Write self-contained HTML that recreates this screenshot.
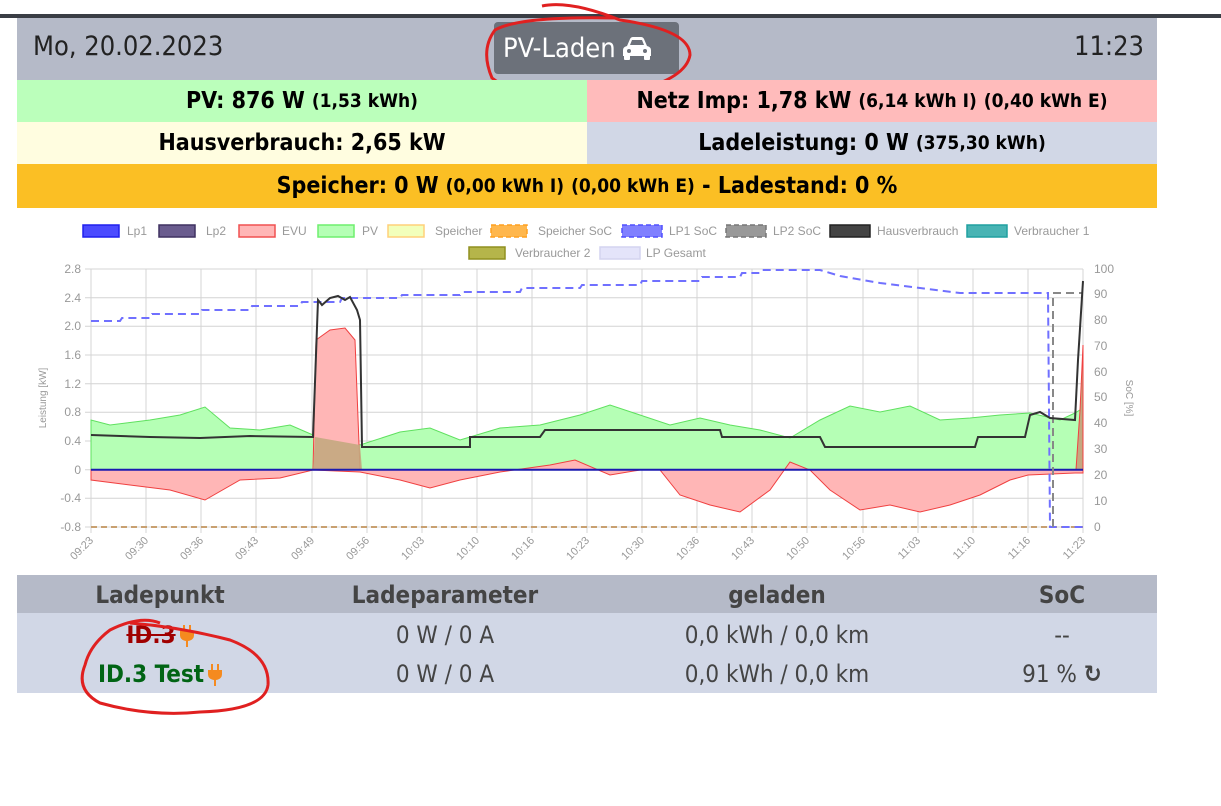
<!DOCTYPE html>
<html><head><meta charset="utf-8"><style>
body{margin:0;width:1221px;height:806px;background:#fff;position:relative;overflow:hidden;font-family:"DejaVu Sans Condensed","Liberation Sans",sans-serif}
.a{position:absolute;box-sizing:border-box}
.c{display:flex;align-items:center;justify-content:center;font-weight:bold;font-size:23px;color:#000}
.c small{font-size:19px;margin-left:7px}
.t{font-size:27px;color:#222;font-family:"DejaVu Sans Condensed",sans-serif}
.plug{display:inline-block;vertical-align:middle;margin-left:4px}
</style></head><body>
<div class="a" style="left:0;top:14px;width:1221px;height:4px;background:#3a3e45"></div>
<div class="a" style="left:17px;top:18px;width:1140px;height:62px;background:#b5bac8"></div>
<div class="a t" style="left:33px;top:31px">Mo, 20.02.2023</div>
<div class="a t" style="left:1074px;top:31px">11:23</div>
<div class="a" style="left:494px;top:22px;width:185px;height:52px;background:#6c717a;border-radius:4px;color:#fff;font-size:27px;display:flex;align-items:center;padding-left:9px">PV-Laden
<svg width="32" height="24" viewBox="0 0 32 24" style="margin-left:5px"><path d="M6 10 L9 3 Q10 1 12 1 H20 Q22 1 23 3 L26 10 Q30 11 30 14 V20 H2 V14 Q2 11 6 10Z M9 9 H23 L21 4 H11Z" fill="#fff" fill-rule="evenodd"/><rect x="3" y="19" width="6" height="5" rx="1" fill="#fff"/><rect x="23" y="19" width="6" height="5" rx="1" fill="#fff"/><circle cx="8" cy="15" r="2" fill="#6c717a"/><circle cx="24" cy="15" r="2" fill="#6c717a"/></svg></div>
<svg class="a" style="left:480px;top:0" width="220" height="110"><path d="M62 6 Q90 0 140 20 Q210 30 210 55 Q205 85 120 98 Q40 100 12 78 Q0 50 15 30 Q40 16 135 18" fill="none" stroke="#e02020" stroke-width="3"/></svg>
<div class="a c" style="left:17px;top:80px;width:570px;height:42px;background:#bbffbb">PV: 876 W<small>(1,53 kWh)</small></div>
<div class="a c" style="left:587px;top:80px;width:570px;height:42px;background:#ffbbbb">Netz Imp: 1,78 kW<small>(6,14 kWh I)</small><small>(0,40 kWh E)</small></div>
<div class="a c" style="left:17px;top:122px;width:570px;height:42px;background:#fffde0">Hausverbrauch: 2,65 kW</div>
<div class="a c" style="left:587px;top:122px;width:570px;height:42px;background:#d1d7e6">Ladeleistung: 0 W<small>(375,30 kWh)</small></div>
<div class="a c" style="left:17px;top:164px;width:1140px;height:44px;background:#fbbf24">Speicher: 0 W<small>(0,00 kWh I)</small><small>(0,00 kWh E)</small>&nbsp;- Ladestand: 0 %</div>

<svg class="a" style="left:0;top:0" width="1221" height="806" font-family="Liberation Sans,sans-serif" font-size="11" fill="#999">
<g stroke-width="1.5" font-size="12">
<rect x="83" y="225" width="36" height="12" fill="#4b4bff" stroke="#2020ee"/><text x="127" y="235">Lp1</text>
<rect x="159" y="225" width="36" height="12" fill="#6a5c8e" stroke="#3f3160"/><text x="206" y="235">Lp2</text>
<rect x="239" y="225" width="36" height="12" fill="#ffb6b6" stroke="#f05050"/><text x="282" y="235">EVU</text>
<rect x="318" y="225" width="36" height="12" fill="#b5ffb5" stroke="#6fef6f"/><text x="362" y="235">PV</text>
<rect x="388" y="225" width="36" height="12" fill="#f2ffbb" stroke="#ffd07a"/><text x="435" y="235">Speicher</text>
<rect x="491" y="225" width="36" height="12" fill="#ffb74d" stroke="#ffa020" stroke-dasharray="5,3"/><text x="538" y="235">Speicher SoC</text>
<rect x="622" y="225" width="40" height="12" fill="#8080ff" stroke="#5050ff" stroke-dasharray="5,3"/><text x="669" y="235">LP1 SoC</text>
<rect x="726" y="225" width="40" height="12" fill="#999" stroke="#777" stroke-dasharray="5,3"/><text x="773" y="235">LP2 SoC</text>
<rect x="830" y="225" width="40" height="12" fill="#444" stroke="#222"/><text x="877" y="235">Hausverbrauch</text>
<rect x="967" y="225" width="40" height="12" fill="#48b4b4" stroke="#20a0a0"/><text x="1014" y="235">Verbraucher 1</text>
<rect x="469" y="247" width="36" height="12" fill="#b5b54a" stroke="#909020"/><text x="515" y="257">Verbraucher 2</text>
<rect x="600" y="247" width="40" height="12" fill="#e4e4fa" stroke="#d4d4f0"/><text x="646" y="257">LP Gesamt</text>
</g>
<g stroke="#d4d4d4" stroke-width="1">
<path d="M85 269H1083M85 297.7H1083M85 326.3H1083M85 355H1083M85 383.7H1083M85 412.3H1083M85 441H1083M85 469.7H1083M85 498.3H1083M85 527H1083"/>
<path d="M91 269V533M146 269V533M201 269V533M256 269V533M312 269V533M367 269V533M422 269V533M477 269V533M532 269V533M587 269V533M642 269V533M697 269V533M752 269V533M807 269V533M863 269V533M918 269V533M973 269V533M1028 269V533M1083 269V533"/>
</g>
<g text-anchor="end" font-size="12"><text x="81" y="273">2.8</text><text x="81" y="302">2.4</text><text x="81" y="330">2.0</text><text x="81" y="359">1.6</text><text x="81" y="388">1.2</text><text x="81" y="416">0.8</text><text x="81" y="445">0.4</text><text x="81" y="474">0</text><text x="81" y="502">-0.4</text><text x="81" y="531">-0.8</text></g>
<g font-size="12"><text x="1094" y="273">100</text><text x="1094" y="298">90</text><text x="1094" y="324">80</text><text x="1094" y="350">70</text><text x="1094" y="376">60</text><text x="1094" y="401">50</text><text x="1094" y="427">40</text><text x="1094" y="453">30</text><text x="1094" y="479">20</text><text x="1094" y="505">10</text><text x="1094" y="531">0</text></g>
<text transform="translate(46,398) rotate(-90)" text-anchor="middle" font-size="10">Leistung [kW]</text>
<text transform="translate(1126,398) rotate(90)" text-anchor="middle" font-size="10">SoC [%]</text>
<g text-anchor="end" font-size="11">
<text transform="translate(94,541) rotate(-45)">09:23</text><text transform="translate(149,541) rotate(-45)">09:30</text><text transform="translate(204,541) rotate(-45)">09:36</text><text transform="translate(259,541) rotate(-45)">09:43</text><text transform="translate(315,541) rotate(-45)">09:49</text><text transform="translate(370,541) rotate(-45)">09:56</text><text transform="translate(425,541) rotate(-45)">10:03</text><text transform="translate(480,541) rotate(-45)">10:10</text><text transform="translate(535,541) rotate(-45)">10:16</text><text transform="translate(590,541) rotate(-45)">10:23</text><text transform="translate(645,541) rotate(-45)">10:30</text><text transform="translate(700,541) rotate(-45)">10:36</text><text transform="translate(755,541) rotate(-45)">10:43</text><text transform="translate(810,541) rotate(-45)">10:50</text><text transform="translate(866,541) rotate(-45)">10:56</text><text transform="translate(921,541) rotate(-45)">11:03</text><text transform="translate(976,541) rotate(-45)">11:10</text><text transform="translate(1031,541) rotate(-45)">11:16</text><text transform="translate(1086,541) rotate(-45)">11:23</text>
</g>
<path d="M91 469.7V420L110 425 150 420 180 415 205 407 230 428 260 430 290 425 313 435 360 445 400 432 430 428 460 440 500 428 540 425 580 415 610 405 640 415 670 425 700 418 730 425 760 430 790 438 820 420 850 406 880 412 910 406 940 420 970 418 1000 415 1030 413 1060 420 1075 413 1083 408V469.7Z" fill="#b5ffb5" stroke="#5fe05f" stroke-width="1"/>
<path d="M91 469.7V480L130 485 170 490 205 500 240 480 280 478 313 470 360 472 400 480 430 488 460 480 500 472 550 465 575 460 610 475 640 470 660 470 680 495 710 505 740 512 770 490 790 462 810 470 830 490 860 510 890 505 920 512 950 505 980 495 1010 480 1028 475 1075 473 1083 473V469.7Z" fill="#ffb6b6" stroke="#f04040" stroke-width="1"/>
<path d="M313 469.7L316 340 330 330 345 328 355 340 360 469.7Z" fill="#ffb6b6" stroke="#f04040" stroke-width="1"/>
<path d="M313 469.7L315 437 360 445 362 469.7Z" fill="#c4a880" opacity=".9"/>
<path d="M1076 469.7L1080 410 1083 345V469.7Z" fill="#c4a880" stroke="#f04040"/>
<path d="M91 527H1083" stroke="#c8a070" stroke-width="2" stroke-dasharray="6,4"/>
<path d="M91 469.7H1083" stroke="#1a1ab0" stroke-width="2"/>
<path d="M91 321H120L122 318H150L152 314H200L202 310H250L252 306H300L302 302H340L342 298H400L402 295H460L462 292H520L522 288H580L582 285H640L642 281H700L702 277H740L742 273H760L762 270H820L840 276 880 283 920 288 960 293H1048L1050 527H1083" fill="none" stroke="#7070ff" stroke-width="2" stroke-dasharray="8,5"/>
<path d="M1053 527V293H1083" fill="none" stroke="#888" stroke-width="2" stroke-dasharray="8,5"/>
<path d="M91 435L150 437 200 438 250 436 313 437 318 300 322 305 330 298 338 296 345 300 350 297 357 310 360 320 362 447H470V437H540L545 430H720L722 437H820L825 447H975L978 437H1025L1030 415 1040 412 1050 418 1075 420 1078 360 1083 281" fill="none" stroke="#333" stroke-width="2"/>
</svg>

<div class="a" style="left:17px;top:575px;width:1140px;height:38px;background:#b5bac8"></div>
<div class="a" style="left:17px;top:613px;width:1140px;height:80px;background:#d1d7e6"></div>
<div style="position:absolute;left:17px;top:575px;width:1140px;font-size:24px;color:#444;font-family:'DejaVu Sans Condensed',sans-serif">
<div style="display:flex;height:40px;align-items:center;font-weight:bold"><div style="width:286px;text-align:center">Ladepunkt</div><div style="width:284px;text-align:center">Ladeparameter</div><div style="width:380px;text-align:center">geladen</div><div style="width:190px;text-align:center">SoC</div></div>
<div style="display:flex;height:39px;align-items:center;font-size:24px"><div style="width:286px;text-align:center;color:#a00000;font-weight:bold"><s>ID.3</s><svg class="plug" width="14" height="22" viewBox="0 0 14 22"><path d="M3 0H5V6H9V0H11V6H14V10Q14 15 8 16V22H6V16Q0 15 0 10V6H3Z" fill="#f58a1f"/></svg></div><div style="width:284px;text-align:center">0 W / 0 A</div><div style="width:380px;text-align:center">0,0 kWh / 0,0 km</div><div style="width:190px;text-align:center">--</div></div>
<div style="display:flex;height:39px;align-items:center;font-size:24px"><div style="width:286px;text-align:center;color:#006414;font-weight:bold">ID.3 Test<svg class="plug" width="14" height="22" viewBox="0 0 14 22"><path d="M3 0H5V6H9V0H11V6H14V10Q14 15 8 16V22H6V16Q0 15 0 10V6H3Z" fill="#f58a1f"/></svg></div><div style="width:284px;text-align:center">0 W / 0 A</div><div style="width:380px;text-align:center">0,0 kWh / 0,0 km</div><div style="width:190px;text-align:center">91 % <b>&#x21BB;</b></div></div>
</div>
<svg class="a" style="left:60px;top:615px" width="220" height="110"><path d="M100 8 Q80 0 50 15 Q30 30 25 50 Q15 75 40 88 Q90 102 140 97 Q205 95 208 70 Q210 40 170 25 Q120 12 70 8" fill="none" stroke="#e02020" stroke-width="3"/></svg>
</body></html>
